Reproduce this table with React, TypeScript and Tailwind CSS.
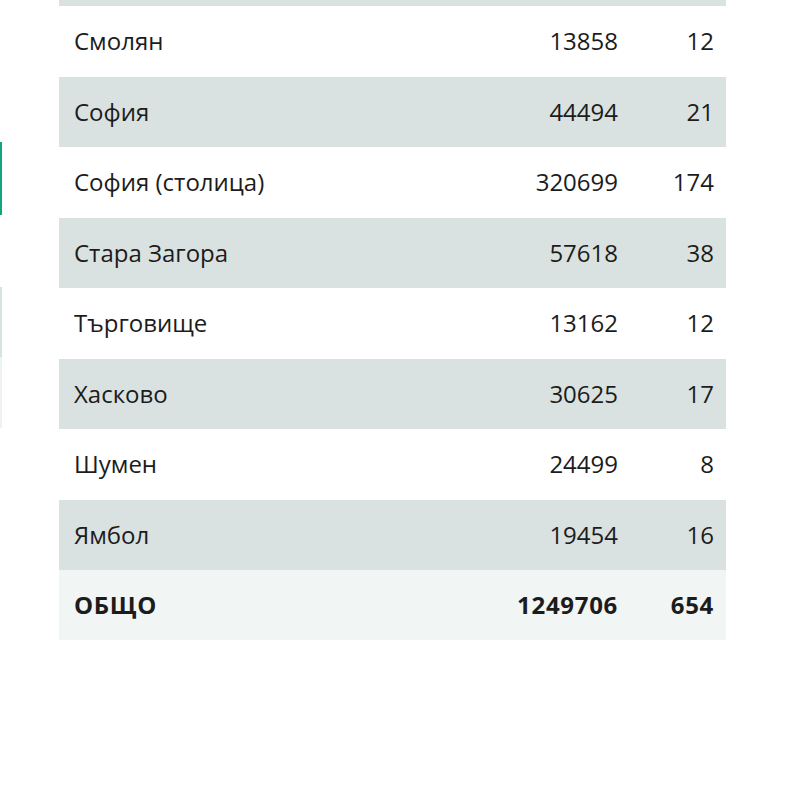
const rows = [
  { name: "Смолян", votes: "13858", sections: "12" },
  { name: "София", votes: "44494", sections: "21" },
  { name: "София (столица)", votes: "320699", sections: "174" },
  { name: "Стара Загора", votes: "57618", sections: "38" },
  { name: "Търговище", votes: "13162", sections: "12" },
  { name: "Хасково", votes: "30625", sections: "17" },
  { name: "Шумен", votes: "24499", sections: "8" },
  { name: "Ямбол", votes: "19454", sections: "16" },
]

export default function App() {
  return (
    <div
      className="relative w-[800px] h-[800px] bg-white overflow-hidden text-[#1c1c1c]"
      style={{ fontFamily: '"Open Sans", "Noto Sans", sans-serif' }}
    >
      {/* side tabs peeking in at the left edge */}
      <div className="absolute left-0 top-[142px] w-[2px] h-[73px] bg-[#13a57c]"></div>
      <div className="absolute left-0 top-[287px] w-[2px] h-[70px] bg-[#d6e4e0]"></div>
      <div className="absolute left-0 top-[357px] w-[2px] h-[71px] bg-[#eef3f1]"></div>

      <div className="ml-[59px] w-[667px] text-[24px]">
        <div className="h-[6px] bg-[#d9e2e0]"></div>

        {rows.map((r, i) => (
          <div
            key={i}
            className={
              "grid grid-cols-[1fr_96px] h-[70.5px] items-center " +
              (i % 2 === 1 ? "bg-[#d9e2e0]" : "bg-white")
            }
          >
            <div className="flex justify-between pl-[15px] pr-[12px]">
              <span>{r.name}</span>
              <span>{r.votes}</span>
            </div>
            <div className="text-right pr-[12px]">{r.sections}</div>
          </div>
        ))}

        <div className="grid grid-cols-[1fr_96px] h-[70px] items-center bg-[#f1f5f4] font-bold tracking-[0.7px]">
          <div className="flex justify-between pl-[15px] pr-[12px]">
            <span>ОБЩО</span>
            <span>1249706</span>
          </div>
          <div className="text-right pr-[12px]">654</div>
        </div>
      </div>
    </div>
  )
}
